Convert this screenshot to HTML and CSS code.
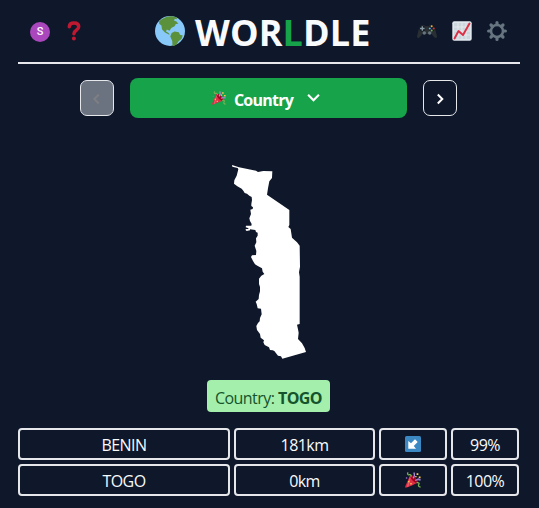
FILE: index.html
```html
<!DOCTYPE html>
<html lang="en">
<head>
<meta charset="utf-8">
<title>Worldle</title>
<link rel="stylesheet" href="styles.css">
</head>
<body>
<svg class="defs" aria-hidden="true">
  <symbol id="party" viewBox="0 0 36 36">
    <path fill="#dd2e44" d="M11.6 7.6C11 8.3 1.4 30 .5 32.4c-.9 2.400.8 3.600 3.200 2.700C6.200 34.200 28 24.600 28.500 24c1-2-2-7.500-6.500-11.700S12.600 6.600 11.600 7.600z"/>
    <path fill="#ea596e" d="M13 12 8 32l-4 2 7-24z"/>
    <path fill="#a0041e" d="M12 8c2-2 7 1 11 5s7 9 5 11-7-1-11-5-7-9-5-11z"/>
    <path fill="none" stroke="#aa8dd8" stroke-width="3" d="M18 14c4-4 4-8 2-13M23 19c3-2 6-3 12-1"/>
    <path fill="none" stroke="#77b255" stroke-width="3" d="M13 11c2-3 0-6-3-5S4 5 7 1M26 24c5-1 7 1 5 4s0 5 4 6"/>
    <path fill="#ffcc4d" d="M26 3h4v4h-4zM31 10h4v4h-4zM23 9h3v3h-3zM7 20h3v3H7zM12 25h3v3h-3z"/>
    <path fill="#9266cc" d="M28 14h4v3h-4zM2 12h3v3H2z"/>
  </symbol>
</svg>
<div class="page">
  <header class="header">
    <div class="group">
      <span class="avatar">S</span>
      <svg class="question" viewBox="0 0 14 20"><path fill="none" stroke="#be1931" stroke-width="3.500" stroke-linecap="round" stroke-linejoin="round" d="M2.300 5.700C2.400 3.300 4.300 2 7 2c2.900 0 4.700 1.500 4.700 3.800 0 3.700-4.800 3.200-4.800 7"/><circle cx="6.900" cy="17.600" r="2" fill="#be1931"/></svg>
    </div>
    <div class="brand">
      <svg class="globe" viewBox="0 0 36 36"><circle fill="#88c9f9" cx="18" cy="18" r="18"/><path fill="#5c913b" d="M5 6.200C8 3 13 .7 18 .2c3 0 6 .6 8.600 1.800l-.8 2-2-.7-1 2 3 1.200 2.200 2.700-3 .3-1.500 2.800-4 2-2 3.500-3.300-1.500-1 2.200 2.700 1.600 1.800 2-1.200.2-4.500-2.600-3.500-3.600-.8-4.600-2.700-2.200zM20 20.500l3.500-2 5 1 1.500 3 3.300 1-1.500 4-3.300 2.400-3 4.600-4.500 2.500-.3-7-2.400-5.500z"/></svg>
      <h1 class="title">WOR<span class="accent">L</span>DLE</h1>
    </div>
    <div class="group group-end">
      <svg class="icon" viewBox="0 0 20 20"><path fill="#292f33" d="M3 5.200 5 4h2l1.500 1.200h3L13 4h2l2 1.200 1.500 4L20 15.500c0 1.800-1.800 1.800-3 .5l-2.500-3h-9L3 16c-1.200 1.300-3 1.300-3-.5L1.500 9z"/><circle cx="5.300" cy="7.500" r="3" fill="#141b21"/><circle cx="14.700" cy="7.500" r="3" fill="#141b21"/><path stroke="#8899a6" stroke-width="1.400" d="M5.300 5.200v4.600M3 7.500h4.600"/><circle cx="7.300" cy="12" r="1.700" fill="#66757f"/><circle cx="12.700" cy="12" r="1.700" fill="#66757f"/><circle cx="14.700" cy="5.300" r="1" fill="#ffac33"/><circle cx="12.800" cy="7.400" r="1" fill="#55acee"/><circle cx="16.700" cy="7.400" r="1" fill="#dd2e44"/><circle cx="14.700" cy="9.500" r="1" fill="#77b255"/></svg>
      <svg class="icon" viewBox="0 0 20 20"><rect x=".3" y=".3" width="19.400" height="19.400" rx="2" fill="#e1e8ed"/><path fill="#ccd6dd" d="M2 2h16v16H2z"/><path stroke="#e9eef1" stroke-width=".8" d="M2 6h16M2 10h16M2 14h16M6 2v16M10 2v16M14 2v16"/><path fill="none" stroke="#dd2e44" stroke-width="1.900" stroke-linecap="round" stroke-linejoin="round" d="m2.500 17.500 4-7.500 4.500 4L17.500 2.500"/></svg>
      <svg class="icon" viewBox="0 0 20 20"><g fill="none" stroke="#66757f"><circle cx="10" cy="10" r="6" stroke-width="2.500"/><path stroke-width="3.200" stroke-linecap="round" d="M10 1.600v2M10 16.400v2M1.600 10h2M16.400 10h2M4 4l1.400 1.400M14.600 14.600 16 16M4 16l1.400-1.400M14.600 5.400 16 4"/></g></svg>
    </div>
  </header>

  <nav class="rounds">
    <button class="step step-off"><svg viewBox="0 0 12 12"><path d="M7.800 1.500 3.300 6l4.500 4.500"/></svg></button>
    <button class="round"><svg class="party-small"><use href="#party"/></svg><span>Country</span><svg class="chevron" viewBox="0 0 12 8"><path d="m1 1.500 5 5 5-5"/></svg></button>
    <button class="step"><svg viewBox="0 0 12 12"><path d="M3.800 1.500 8.300 6l-4.500 4.500"/></svg></button>
  </nav>

  <svg class="map" viewBox="0 0 300 630"><path fill="#fff" d="M36 30 57 37 108 47 114 51 130 48 157 49 156 69 148 79 144 100 141 119 208 165 208 210 205 216 212 222 216 248 231 262 239 272 240 335 237 352 239 365 239 507 231 509 234 523 236 533 234 552 246 565 254 579 258 591 187 611 183 604 174 602 163 588 158 586 150 585 147 577 134 570 130 562 132 556 122 548 120 537 111 525 109 513 114 504 119 499 120 489 125 478 123 461 113 460 110 447 107 440 116 432 117 420 120 409 120 396 117 387 117 371 124 362 133 357 128 350 126 340 112 332 105 328 99 318 93 306 96 301 108 300 109 288 104 272 109 262 108 250 113 242 113 233 108 231 106 225 90 223 90 226 80 228 76 224 79 222 86 222 84 219 77 217 78 212 94 212 95 207 90 198 88 190 93 177 91 164 98 162 99 157 94 153 94 147 96 135 95 126 88 122 81 116 74 114 70 107 65 101 52 94 42 86 43 76 50 62 55 43 53 39 37 35z"/></svg>

  <p class="answer">Country: <b>TOGO</b></p>

  <div class="guesses">
    <div class="cell">BENIN</div><div class="cell">181km</div>
    <div class="cell"><svg viewBox="0 0 16 16"><rect width="16" height="16" rx="1.500" fill="#3b88c3"/><path fill="#fff" d="M3.300 5 6 7.200 10 3.300l2.700 2.700-3.900 4L11 12.700H3.300z"/></svg></div><div class="cell">99%</div>
    <div class="cell">TOGO</div><div class="cell">0km</div>
    <div class="cell"><svg><use href="#party"/></svg></div><div class="cell">100%</div>
  </div>
</div>
</body>
</html>
```
FILE: styles.css
```css
* { box-sizing: border-box; }
body {
  margin: 0;
  background: #0f172a;
  color: #f8fafc;
  font: 16px/24px "Open Sans", "Noto Sans", sans-serif;
  overflow: hidden;
}
svg { display: block; flex: none; }
.defs { width: 0; height: 0; position: absolute; }
.page {
  width: 502px;
  margin-left: 18px;
  display: flex;
  flex-direction: column;
  align-items: center;
}
.header {
  width: 100%;
  height: 64px;
  border-bottom: 2px solid #e5e7eb;
  display: grid;
  grid-template-columns: 137px 1fr 137px;
  align-items: center;
}
.group { display: flex; align-items: center; gap: 17px; padding-left: 12px; }
.group-end { justify-content: flex-end; gap: 15px; padding: 0 13px 0 0; }
.avatar {
  width: 20px;
  height: 20px;
  margin-top: 2px;
  border-radius: 50%;
  background: #ab47bc;
  font: 500 11px/20px Roboto, sans-serif;
  text-align: center;
}
.question { width: 14px; height: 20px; }
.icon { width: 20px; height: 20px; }
.brand { display: flex; align-items: center; gap: 10px; }
.globe { width: 30px; height: 30px; }
.title { margin: 0; font-size: 36px; line-height: 40px; font-weight: 700; padding-top: 3px; letter-spacing: .1px; }
.accent { color: #16a34a; }
.rounds {
  height: 40px;
  margin-top: 14px;
  display: flex;
  align-items: center;
  gap: 16px;
  align-self: flex-start;
  padding-left: 62px;
}
button { margin: 0; padding: 0; color: #fff; display: flex; align-items: center; justify-content: center; }
button path { fill: none; stroke: currentColor; stroke-width: 2; }
.step { width: 34px; height: 36px; border: 1px solid #e5e7eb; border-radius: 7px; background: #0f172a; }
.step svg { width: 12px; height: 12px; margin-top: 2px; }
.step-off { background: #6b7280; color: #7d7f83; }
.round {
  width: 277px;
  height: 40px;
  border: 0;
  border-radius: 8px;
  background: #16a34a;
  font: 700 16px/24px "Open Sans", "Noto Sans", sans-serif;
  padding-right: 5px;
}
.round span { margin: 3px 14px 0 8px; letter-spacing: -.75px; }
.party-small { width: 14px; height: 14px; }
.chevron { width: 13px; height: 9px; margin-bottom: 1px; }
.map { width: 100px; height: 210px; margin: 37px 0 0 2px; }
.answer {
  width: 123px;
  height: 32px;
  margin: 15px 1px 16px 0;
  padding-top: 6px;
  border-radius: 4px;
  background: #a3efab;
  color: #14532d;
  text-align: center;
  font-size: 16px;
  letter-spacing: -.55px;
  white-space: nowrap;
}
.guesses {
  align-self: flex-start;
  display: grid;
  grid-template-columns: 212px 141px 68px 68px;
  grid-auto-rows: 32px;
  gap: 4px;
}
.cell {
  border: 2px solid #e5e7eb;
  border-radius: 4px;
  display: flex;
  align-items: center;
  justify-content: center;
  padding-top: 2px;
  font-size: 16px;
  letter-spacing: -.55px;
}
.cell svg { width: 16px; height: 16px; margin-bottom: 2px; }
```
